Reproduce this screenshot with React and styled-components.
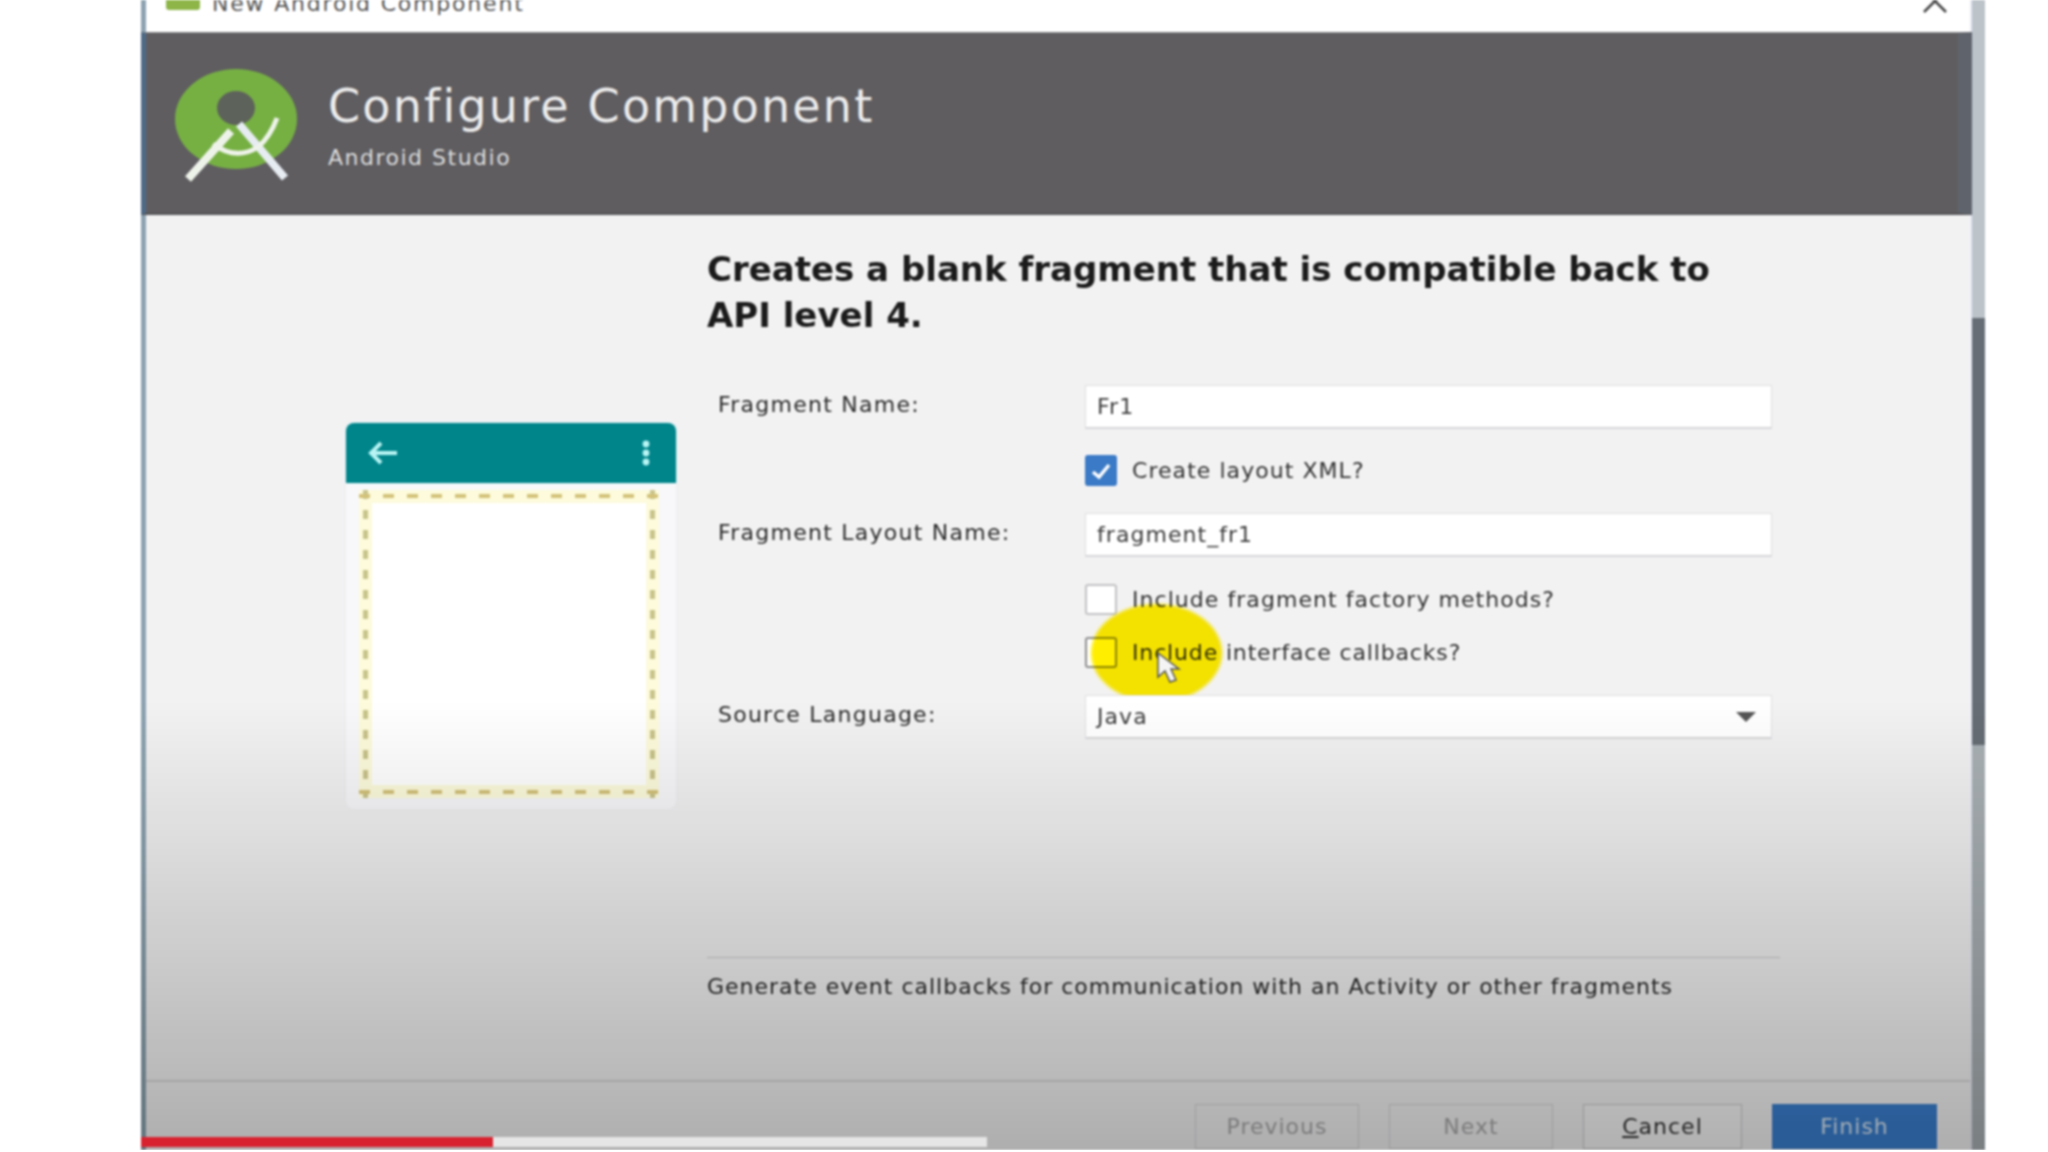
import React from "react";
import styled, { createGlobalStyle } from "styled-components";

const Global = createGlobalStyle`
  html, body {
    margin: 0;
    background: #fff;
  }
  * {
    box-sizing: border-box;
  }
`;

const Frame = styled.div`
  position: relative;
  display: flex;
  width: 1844px;
  height: 1150px;
  margin-left: 141px;
  overflow: hidden;
  font-family: "DejaVu Sans", sans-serif;
  filter: blur(0.9px);
`;

const Dialog = styled.div`
  display: flex;
  flex-direction: column;
  flex: 1;
  min-width: 0;
  background: #f3f2f3;
  border-left: 5px solid #8ca3b0;
  border-right: 2px solid #e6ebf4;
`;

const Strip = styled.div`
  display: flex;
  flex-direction: column;
  width: 13px;
`;

const StripPart = styled.div`
  height: ${(p) => p.$h}px;
  flex: ${(p) => (p.$h ? "none" : 1)};
  background: ${(p) => p.$c};
`;

const TitleBar = styled.div`
  display: flex;
  align-items: flex-end;
  height: 32px;
  padding: 0 22px 16px 20px;
  background: #fff;
  overflow: hidden;
`;

const TitleIcon = styled.div`
  align-self: flex-start;
  width: 34px;
  height: 10px;
  margin-right: 12px;
  background: #8db548;
  border-radius: 0 0 3px 3px;
`;

const TitleText = styled.div`
  font-size: 22px;
  line-height: 24px;
  letter-spacing: 1.8px;
  color: #555;
`;

const CloseIcon = styled.svg`
  align-self: flex-start;
  margin-left: auto;
`;

const Header = styled.div`
  display: flex;
  align-items: flex-start;
  height: 183px;
  margin: 0 -2px 0 -5px;
  padding: 36px 0 0 28px;
  background: #5f5d60;
  border-top: 1px solid #8b8a8c;
  border-bottom: 2px solid #555356;
  border-left: 5px solid #4f6a86;
  border-right: 14px solid #5f646c;
`;

const HeaderText = styled.div`
  margin-left: 30px;
  padding-top: 9px;
  color: #ececec;
`;

const HeaderTitle = styled.div`
  font-size: 46px;
  line-height: 56px;
  letter-spacing: 2.2px;
`;

const HeaderSub = styled.div`
  margin-top: 11px;
  font-size: 22px;
  line-height: 26px;
  letter-spacing: 1.5px;
  color: #dcdcdc;
`;

const Body = styled.div`
  display: grid;
  flex: 1;
  grid-template-columns: 330px 1073px;
  column-gap: 31px;
  padding-left: 200px;
  min-height: 0;
`;

const Preview = styled.div`
  align-self: start;
  margin-top: 208px;
  width: 330px;
  height: 386px;
  background: #f8f8fa;
  border-radius: 8px;
  box-shadow: 0 0 4px #ececef;
`;

const PreviewBar = styled.div`
  display: flex;
  align-items: center;
  justify-content: space-between;
  height: 60px;
  padding: 0 26px 0 22px;
  background: #00858a;
  border-radius: 8px 8px 0 0;
  box-shadow: 0 0 2px #a8f0f0;
`;

const DashedArea = styled.div`
  width: 300px;
  height: 308px;
  margin: 7px 0 0 13px;
  background-color: #fdfbdc;
  background-image:
    repeating-linear-gradient(90deg, #d3c27a 0 11px, transparent 11px 24px),
    repeating-linear-gradient(90deg, #d3c27a 0 11px, transparent 11px 24px),
    repeating-linear-gradient(180deg, #c9c48c 0 9px, transparent 9px 20px),
    repeating-linear-gradient(180deg, #c9c48c 0 9px, transparent 9px 20px),
    linear-gradient(#fff, #fff);
  background-size:
    100% 4px,
    100% 4px,
    5px 100%,
    5px 100%,
    calc(100% - 26px) calc(100% - 26px);
  background-position:
    0 4px,
    0 calc(100% - 4px),
    4px 0,
    calc(100% - 4px) 0,
    center;
  background-repeat: no-repeat;
`;

const Form = styled.div`
  display: flex;
  flex-direction: column;
  padding-top: 31px;
`;

const Heading = styled.div`
  margin-bottom: 47px;
  font-size: 34px;
  font-weight: bold;
  line-height: 46px;
  color: #1b1b1b;
`;

const Row = styled.div`
  position: relative;
  display: grid;
  grid-template-columns: 367px 1fr;
  align-items: start;
  margin-top: ${(p) => p.$top || 0}px;
  padding: 0 8px 0 11px;
`;

const Label = styled.div`
  grid-column: 1;
  padding-top: 2px;
  font-size: 22px;
  line-height: 36px;
  letter-spacing: 1.25px;
  color: #2b2b2b;
`;

const Field = styled.div`
  grid-column: 2;
  display: flex;
  align-items: center;
  justify-content: space-between;
  height: 44px;
  padding: 0 14px 0 11px;
  font-size: 22px;
  letter-spacing: 1.05px;
  color: #3c3c3c;
  background: #fff;
  border: 1px solid #e0dfe1;
  border-bottom: 2px solid #d6d5d7;
`;

const CheckRow = styled.div`
  grid-column: 2;
  display: flex;
  align-items: center;
  height: 31px;
  font-size: 22px;
  letter-spacing: ${(p) => p.$ls || 1.05}px;
  color: #333;
`;

const Box = styled.div`
  display: flex;
  align-items: center;
  justify-content: center;
  width: 32px;
  height: 31px;
  margin-right: 15px;
  background: ${(p) => (p.$on ? "#3a7ac6" : "#fff")};
  border: 2px solid ${(p) => (p.$on ? "#3a7ac6" : p.$line || "#c2c2c4")};
  border-radius: 3px;
`;

const Highlight = styled.div`
  position: absolute;
  left: 384px;
  top: -33px;
  width: 131px;
  height: 98px;
  border-radius: 50%;
  background: #ffee00;
  mix-blend-mode: multiply;
  filter: blur(1.5px);
`;

const Cursor = styled.svg`
  position: absolute;
  left: 449px;
  top: 14px;
`;

const Hint = styled.div`
  height: 123px;
  margin-top: auto;
  padding-top: 14px;
  font-size: 22px;
  line-height: 30px;
  letter-spacing: 1px;
  color: #2b2b2b;
  border-top: 1px solid #c9c9cb;
`;

const Footer = styled.div`
  display: flex;
  justify-content: flex-end;
  gap: 30px;
  height: 70px;
  padding: 22px 33px 0 0;
  border-top: 2px solid #d8d8da;
`;

const Button = styled.div`
  display: flex;
  align-items: center;
  justify-content: center;
  width: ${(p) => p.$w}px;
  height: 45px;
  font-size: 22px;
  letter-spacing: 1px;
  color: ${(p) => p.$color};
  background: ${(p) => p.$bg};
  border: 1px solid ${(p) => p.$line};
`;

const Shade = styled.div`
  position: absolute;
  left: 0;
  right: 0;
  top: 700px;
  bottom: 0;
  background: linear-gradient(rgba(0, 0, 0, 0), rgba(0, 0, 0, 0.28));
  pointer-events: none;
`;

const Progress = styled.div`
  position: absolute;
  left: 0;
  bottom: 3px;
  display: flex;
  width: 846px;
  height: 10px;
  background: #e6e6e6;
`;

const Played = styled.div`
  width: ${(p) => p.$w}px;
  background: #d8222f;
`;

function StudioLogo() {
  return (
    <svg width="124" height="114" viewBox="0 0 124 114">
      <ellipse cx="62" cy="50" rx="61" ry="50" fill="#76b043" />
      <ellipse cx="62" cy="39" rx="19" ry="17" fill="#5d625a" />
      <path d="M57 62 L14 110" stroke="#eef3ea" strokeWidth="8" fill="none" />
      <path d="M65 55 L111 109" stroke="#e6ecf2" strokeWidth="8" fill="none" />
      <path d="M39 75 Q62 92 84 78 Q96 68 103 49" stroke="#eef3ea" strokeWidth="5" fill="none" />
    </svg>
  );
}

export default function App() {
  return (
    <>
      <Global />
      <Frame>
        <Dialog>
          <TitleBar>
            <TitleIcon />
            <TitleText>New Android Component</TitleText>
            <CloseIcon width="26" height="13" viewBox="0 0 26 13">
              <path d="M2 12 L13 1 L24 12 M13 1 L8 -4 M13 1 L18 -4" stroke="#444" strokeWidth="2.5" fill="none" />
            </CloseIcon>
          </TitleBar>
          <Header>
            <StudioLogo />
            <HeaderText>
              <HeaderTitle>Configure Component</HeaderTitle>
              <HeaderSub>Android Studio</HeaderSub>
            </HeaderText>
          </Header>
          <Body>
            <Preview>
              <PreviewBar>
                <svg width="30" height="24" viewBox="0 0 30 24">
                  <path d="M29 12 H4 M13 2 L3 12 L13 22" stroke="#b8f4f4" strokeWidth="4" fill="none" />
                </svg>
                <svg width="8" height="26" viewBox="0 0 8 26">
                  <circle cx="4" cy="4" r="3.4" fill="#b8f4f4" />
                  <circle cx="4" cy="13" r="3.4" fill="#b8f4f4" />
                  <circle cx="4" cy="22" r="3.4" fill="#b8f4f4" />
                </svg>
              </PreviewBar>
              <DashedArea />
            </Preview>
            <Form>
              <Heading>
                Creates a blank fragment that is compatible back to
                <br />
                API level 4.
              </Heading>
              <Row>
                <Label>Fragment Name:</Label>
                <Field>Fr1</Field>
              </Row>
              <Row $top={26}>
                <CheckRow>
                  <Box $on>
                    <svg width="20" height="18" viewBox="0 0 20 18">
                      <path d="M2 10 L8 15 L18 3" stroke="#fff" strokeWidth="3.5" fill="none" />
                    </svg>
                  </Box>
                  Create layout XML?
                </CheckRow>
              </Row>
              <Row $top={27}>
                <Label>Fragment Layout Name:</Label>
                <Field>fragment_fr1</Field>
              </Row>
              <Row $top={27}>
                <CheckRow>
                  <Box />
                  Include fragment factory methods?
                </CheckRow>
              </Row>
              <Row $top={22}>
                <CheckRow $ls={0.85}>
                  <Box $line="#8e8e8e" />
                  Include interface callbacks?
                </CheckRow>
                <Highlight />
                <Cursor width="28" height="34" viewBox="0 0 28 34">
                  <path d="M2 2 L2 26 L9 20 L14 31 L20 29 L15 18 L23 18 Z" fill="#f4f4f4" stroke="#555" strokeWidth="1.5" />
                </Cursor>
              </Row>
              <Row $top={27}>
                <Label>Source Language:</Label>
                <Field>
                  Java
                  <svg width="22" height="12" viewBox="0 0 22 12">
                    <path d="M1 1 H21 L11 11 Z" fill="#555" />
                  </svg>
                </Field>
              </Row>
              <Hint>Generate event callbacks for communication with an Activity or other fragments</Hint>
            </Form>
          </Body>
          <Footer>
            <Button $w={164} $bg="transparent" $line="#d4d4d6" $color="#a8a8aa">Previous</Button>
            <Button $w={164} $bg="transparent" $line="#d4d4d6" $color="#a8a8aa">Next</Button>
            <Button $w={159} $bg="#f6f6f6" $line="#c8c8ca" $color="#333"><u>C</u>ancel</Button>
            <Button $w={165} $bg="#3a7fcf" $line="#3a7fcf" $color="#dbe8f5">Finish</Button>
          </Footer>
        </Dialog>
        <Strip>
          <StripPart $h={318} $c="#bcc3c9" />
          <StripPart $h={427} $c="#666d74" />
          <StripPart $c="#a9b0b4" />
        </Strip>
        <Shade />
        <Progress>
          <Played $w={352} />
        </Progress>
      </Frame>
    </>
  );
}
